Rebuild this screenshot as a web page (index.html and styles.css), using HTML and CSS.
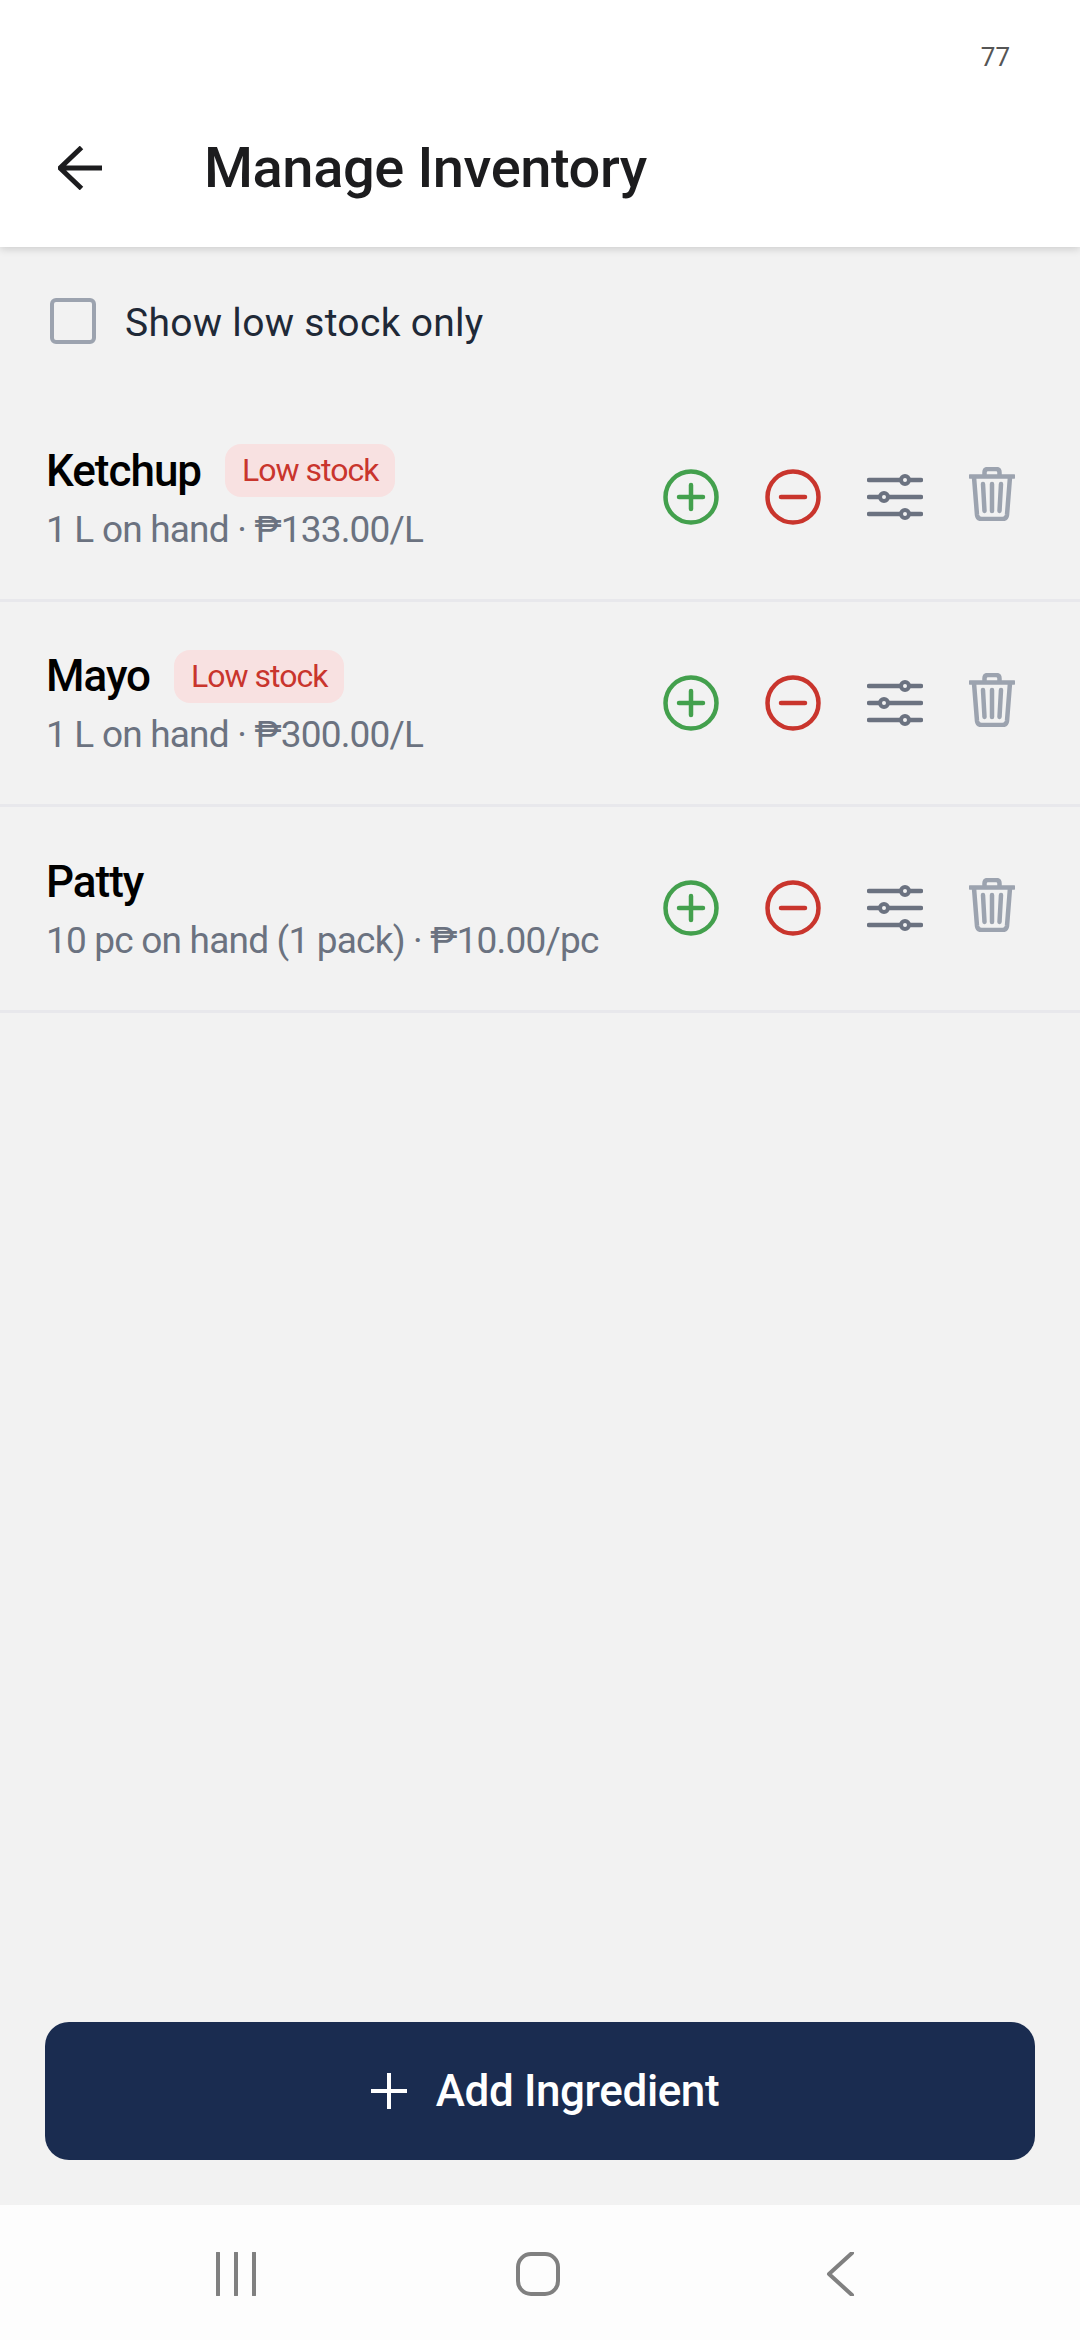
FILE: index.html
```html
<!DOCTYPE html>
<html lang="en">
<head>
  <meta charset="UTF-8">
  <meta name="viewport" content="width=device-width, initial-scale=1.0">
  <title>Manage Inventory</title>
  <link rel="stylesheet" href="styles.css">
</head>
<body>
  <div class="screen">
    <!-- Header -->
    <header class="top-bar">
      <div class="status-bar">77</div>
      <div class="title-row">
        <svg class="back-arrow" viewBox="0 0 46 44"><path d="M44 22H3M23.500 1.500L2 22l21.500 20.500" /></svg>
        <h1>Manage Inventory</h1>
      </div>
    </header>

    <main class="content">
      <label class="filter">
        <span class="checkbox"></span>
        <span>Show low stock only</span>
      </label>

      <div class="item">
        <div class="item-info">
          <div class="item-name-row"><span class="item-name">Ketchup</span><span class="badge">Low stock</span></div>
          <div class="item-sub">1 L on hand · ₱133.00/L</div>
        </div>
        <div class="item-actions">
          <svg class="icon" viewBox="0 0 56 56"><circle class="green" cx="28" cy="28" r="25.500"/><path class="green" d="M28 16v24M16 28h24"/></svg>
          <svg class="icon" viewBox="0 0 56 56"><circle class="red" cx="28" cy="28" r="25.500"/><path class="red" d="M16 28h24"/></svg>
          <svg class="icon" viewBox="0 0 56 56"><path class="slate" d="M2 11h52M2 28h52M2 45h52"/><circle class="knob" cx="38" cy="11" r="4"/><circle class="knob" cx="17" cy="28" r="4"/><circle class="knob" cx="38" cy="45" r="4"/></svg>
          <svg class="icon trash" viewBox="0 0 46 54"><path class="gray" d="M1 9.500h44M15.500 9V5.500Q15.500 2 19 2h8Q30.500 2 30.500 5.500V9M5 10l3 38Q8.500 52 12.500 52h21Q37.500 52 38 48l3-38M14 17l1.500 27M23 17v27M32 17l-1.500 27"/></svg>
        </div>
      </div>

      <div class="item">
        <div class="item-info">
          <div class="item-name-row"><span class="item-name">Mayo</span><span class="badge">Low stock</span></div>
          <div class="item-sub">1 L on hand · ₱300.00/L</div>
        </div>
        <div class="item-actions">
          <svg class="icon" viewBox="0 0 56 56"><circle class="green" cx="28" cy="28" r="25.500"/><path class="green" d="M28 16v24M16 28h24"/></svg>
          <svg class="icon" viewBox="0 0 56 56"><circle class="red" cx="28" cy="28" r="25.500"/><path class="red" d="M16 28h24"/></svg>
          <svg class="icon" viewBox="0 0 56 56"><path class="slate" d="M2 11h52M2 28h52M2 45h52"/><circle class="knob" cx="38" cy="11" r="4"/><circle class="knob" cx="17" cy="28" r="4"/><circle class="knob" cx="38" cy="45" r="4"/></svg>
          <svg class="icon trash" viewBox="0 0 46 54"><path class="gray" d="M1 9.500h44M15.500 9V5.500Q15.500 2 19 2h8Q30.500 2 30.500 5.500V9M5 10l3 38Q8.500 52 12.500 52h21Q37.500 52 38 48l3-38M14 17l1.500 27M23 17v27M32 17l-1.500 27"/></svg>
        </div>
      </div>

      <div class="item">
        <div class="item-info">
          <div class="item-name-row"><span class="item-name">Patty</span></div>
          <div class="item-sub">10 pc on hand (1 pack) · ₱10.00/pc</div>
        </div>
        <div class="item-actions">
          <svg class="icon" viewBox="0 0 56 56"><circle class="green" cx="28" cy="28" r="25.500"/><path class="green" d="M28 16v24M16 28h24"/></svg>
          <svg class="icon" viewBox="0 0 56 56"><circle class="red" cx="28" cy="28" r="25.500"/><path class="red" d="M16 28h24"/></svg>
          <svg class="icon" viewBox="0 0 56 56"><path class="slate" d="M2 11h52M2 28h52M2 45h52"/><circle class="knob" cx="38" cy="11" r="4"/><circle class="knob" cx="17" cy="28" r="4"/><circle class="knob" cx="38" cy="45" r="4"/></svg>
          <svg class="icon trash" viewBox="0 0 46 54"><path class="gray" d="M1 9.500h44M15.500 9V5.500Q15.500 2 19 2h8Q30.500 2 30.500 5.500V9M5 10l3 38Q8.500 52 12.500 52h21Q37.500 52 38 48l3-38M14 17l1.500 27M23 17v27M32 17l-1.500 27"/></svg>
        </div>
      </div>
    </main>

    <div class="footer">
      <button class="add-btn">
        <svg class="add-plus" viewBox="0 0 36 36"><path d="M18 0v36M0 18h36"/></svg>
        <span>Add Ingredient</span>
      </button>
    </div>

    <!-- System navigation -->
    <nav class="nav-bar">
      <svg class="nav-icon" viewBox="0 0 44 44"><path d="M4 1v42M22 1v42M40 1v42"/></svg>
      <svg class="nav-icon" viewBox="0 0 44 44"><rect x="2" y="2" width="40" height="40" rx="13"/></svg>
      <svg class="nav-icon" viewBox="0 0 44 44"><path d="M34 1L11 22l23 21"/></svg>
    </nav>
  </div>
</body>
</html>
```

FILE: styles.css
```css
* {
  box-sizing: border-box;
}
body {
  margin: 0;
  font-family: Roboto, "Noto Sans", sans-serif;
  background: #f2f2f2;
}
.screen {
  width: 1080px;
  height: 2340px;
  display: flex;
  flex-direction: column;
}
.top-bar {
  height: 247px;
  background: #fff;
  box-shadow: 0 2px 8px rgba(0, 0, 0, 0.16);
  position: relative;
}
.status-bar {
  height: 136px;
  padding: 40px 70px 0 0;
  text-align: right;
  font-size: 26px;
  line-height: 34px;
  color: #555;
}
.title-row {
  display: flex;
  align-items: center;
  padding-left: 58px;
  gap: 100px;
}
.back-arrow {
  width: 46px;
  height: 44px;
  flex: none;
  fill: none;
  stroke: #1c1c1e;
  stroke-width: 5;
}
h1 {
  margin: 0;
  font-size: 56px;
  line-height: 64px;
  font-weight: 500;
  letter-spacing: -0.4px;
  color: #1c1c1e;
}
.content {
  flex: 1;
}
.filter {
  height: 149px;
  padding: 51px 0 0 50px;
  display: flex;
  align-items: flex-start;
  gap: 29px;
  font-size: 39px;
  line-height: 50px;
  letter-spacing: 0.3px;
  color: #1f2937;
}
.checkbox {
  width: 46px;
  height: 46px;
  flex: none;
  border: 4px solid #9ca3af;
  border-radius: 6px;
}
.item {
  height: 205.500px;
  padding: 0 65px 0 46px;
  display: flex;
  align-items: center;
  justify-content: space-between;
  border-bottom: 3px solid #e8e8ec;
}
.item-info {
  padding-top: 3px;
}
.item-name-row {
  display: flex;
  align-items: center;
  gap: 24px;
  height: 54px;
}
.item-name {
  font-size: 44px;
  font-weight: 500;
  letter-spacing: -1px;
  color: #000;
}
.badge {
  padding: 0 17px;
  height: 53px;
  line-height: 53px;
  border-radius: 16px;
  background: #f8e1e1;
  color: #c9352d;
  font-size: 32px;
  letter-spacing: -1px;
}
.item-sub {
  margin-top: 8px;
  font-size: 37px;
  line-height: 48px;
  letter-spacing: -0.8px;
  color: #6b7280;
}
.item-actions {
  display: flex;
  align-items: center;
  gap: 46px;
}
.icon {
  width: 56px;
  height: 56px;
  flex: none;
}
.icon.trash {
  width: 46px;
  height: 54px;
  margin-bottom: 6px;
}
.icon circle,
.icon path {
  fill: none;
  stroke-width: 4.500;
  stroke-linecap: round;
  stroke-linejoin: round;
}
.green { stroke: #43a04d; }
.red { stroke: #c9352d; }
.slate { stroke: #6b7280; }
.gray { stroke: #9ca3af; }
.icon .knob {
  fill: #f2f2f2;
  stroke: #6b7280;
  stroke-width: 4;
}
.footer {
  padding: 0 45px 45px;
}
.add-btn {
  width: 100%;
  height: 138px;
  padding: 0 0 0 10px;
  border: 0;
  border-radius: 24px;
  background: #1a2c50;
  color: #fff;
  font-family: inherit;
  font-size: 44px;
  font-weight: 500;
  letter-spacing: -0.4px;
  display: flex;
  align-items: center;
  justify-content: center;
  gap: 29px;
}
.add-plus {
  width: 36px;
  height: 36px;
  fill: none;
  stroke: #fff;
  stroke-width: 4;
}
.nav-bar {
  height: 135px;
  background: #fdfdfd;
  display: flex;
  align-items: center;
  justify-content: center;
  gap: 258px;
  padding: 2px 4px 0 0;
}
.nav-icon {
  width: 44px;
  height: 44px;
  flex: none;
  fill: none;
  stroke: #808080;
  stroke-width: 4;
  stroke-linecap: round;
  stroke-linejoin: round;
}
```
